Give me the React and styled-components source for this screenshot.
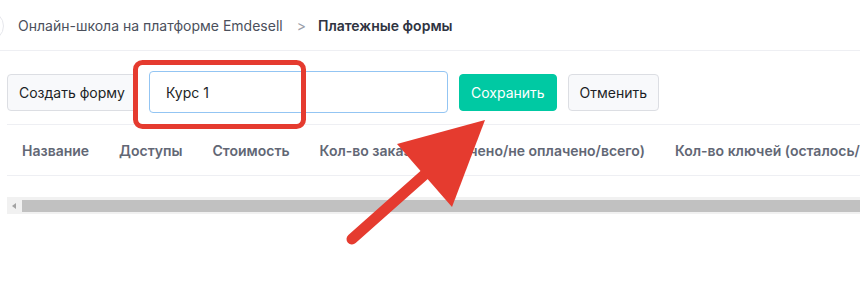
import styled, { createGlobalStyle } from "styled-components";

const GlobalStyle = createGlobalStyle`
  body {
    margin: 0;
    background: #fff;
    font-family: Inter, "Noto Sans", sans-serif;
    overflow: hidden;
  }
`;

const columns = [
  "Название",
  "Доступы",
  "Стоимость",
  "Кол-во заказов (оплачено/не оплачено/всего)",
  "Кол-во ключей (осталось/всего)",
];

export default function App() {
  return (
    <>
      <GlobalStyle />
      <Page>
        <Header>
          <Avatar />
          <Crumb>Онлайн-школа на платформе Emdesell</Crumb>
          <Separator>&gt;</Separator>
          <Crumb $current>Платежные формы</Crumb>
        </Header>

        <Content>
          <Toolbar>
            <Button>Создать форму</Button>
            <NameInput defaultValue="Курс 1" />
            <Button $primary>Сохранить</Button>
            <Button>Отменить</Button>
          </Toolbar>

          <Table>
            <thead>
              <tr>
                {columns.map((c) => (
                  <Th key={c}>{c}</Th>
                ))}
              </tr>
            </thead>
          </Table>

          <ScrollTrack>
            <ScrollArrow />
            <ScrollThumb />
          </ScrollTrack>
        </Content>

        <Annotation width="860" height="296" viewBox="0 0 860 296">
          <rect
            x="135.5"
            y="62.5"
            width="168"
            height="64"
            rx="7"
            fill="none"
            stroke="#e53b2f"
            strokeWidth="5"
          />
          <line
            x1="352"
            y1="239"
            x2="432"
            y2="168"
            stroke="#e53b2f"
            strokeWidth="11"
            strokeLinecap="round"
          />
          <polygon points="485,120 397,144 452,207" fill="#e53b2f" />
        </Annotation>
      </Page>
    </>
  );
}

const Page = styled.div`
  position: relative;
  width: 860px;
  height: 296px;
  overflow: hidden;
`;

const Header = styled.div`
  display: flex;
  align-items: center;
  height: 50px;
  border-bottom: 1px solid #eeeff3;
  padding-left: 18px;
  position: relative;
`;

const Avatar = styled.div`
  position: absolute;
  left: -26px;
  top: 11px;
  width: 28px;
  height: 28px;
  border-radius: 50%;
  border: 1px solid #e6e7ec;
`;

const Crumb = styled.span`
  font-size: 14px;
  color: ${(p) => (p.$current ? "#2f3441" : "#4b505c")};
  font-weight: ${(p) => (p.$current ? 600 : 400)};
`;

const Separator = styled.span`
  font-size: 14px;
  color: #9ba0aa;
  margin: 0 12px 0 14px;
`;

const Content = styled.div`
  padding: 20px 0 0 7px;
`;

const Toolbar = styled.div`
  display: flex;
  align-items: center;
  gap: 11px;
  padding-bottom: 11px;
  border-bottom: 1px solid #eeeff3;
`;

const Button = styled.button`
  height: 37px;
  padding: 0 11px;
  border-radius: 4px;
  font-family: inherit;
  font-size: 14px;
  border: 1px solid ${(p) => (p.$primary ? "#00c9a3" : "#dcdee3")};
  background: ${(p) => (p.$primary ? "#00c9a3" : "#f8f9fb")};
  color: ${(p) => (p.$primary ? "#ffffff" : "#1c1f26")};
`;

const NameInput = styled.input`
  width: 299px;
  height: 42px;
  box-sizing: border-box;
  margin-left: 1px;
  padding: 0 16px;
  border: 1px solid #93c5f3;
  border-radius: 4px;
  font-family: inherit;
  font-size: 14px;
  color: #1c1f26;
  outline: none;
`;

const Table = styled.table`
  border-collapse: collapse;
  white-space: nowrap;
`;

const Th = styled.th`
  height: 50px;
  padding: 0 15px;
  text-align: left;
  font-size: 14px;
  font-weight: 600;
  color: #626775;
  border-bottom: 1px solid #eeeff3;
`;

const ScrollTrack = styled.div`
  display: flex;
  align-items: center;
  margin-top: 21px;
  height: 17px;
  background: #f1f1f1;
`;

const ScrollArrow = styled.div`
  width: 0;
  height: 0;
  margin: 0 6px 0 5px;
  border-top: 3px solid transparent;
  border-bottom: 3px solid transparent;
  border-right: 4px solid #a3a3a3;
`;

const ScrollThumb = styled.div`
  flex: 1;
  height: 12px;
  background: #c1c1c1;
`;

const Annotation = styled.svg`
  position: absolute;
  left: 0;
  top: 0;
  pointer-events: none;
`;
